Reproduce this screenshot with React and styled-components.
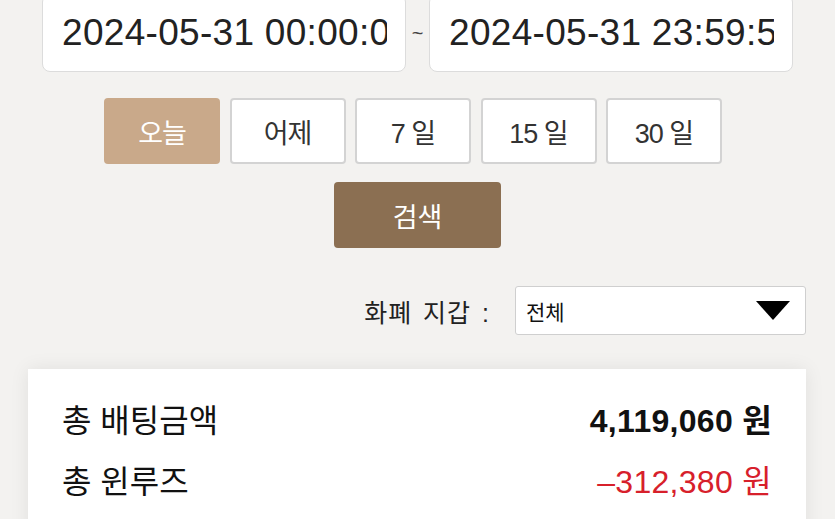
import React from "react";
import styled, { createGlobalStyle } from "styled-components";

const GlobalStyle = createGlobalStyle`
  html, body {
    margin: 0;
    padding: 0;
    background: #f3f2f0;
    font-family: "Liberation Sans", "Noto Sans CJK KR", sans-serif;
    overflow: hidden;
  }
`;

const Page = styled.div`
  width: 835px;
  margin-top: -6px;
`;

const DateRow = styled.div`
  display: flex;
  align-items: center;
  justify-content: center;
  padding: 0 42px;
`;

const DateInput = styled.div`
  width: 364px;
  height: 78px;
  box-sizing: border-box;
  background: #fff;
  border: 1px solid #dcdcdc;
  border-radius: 8px;
  display: flex;
  align-items: center;
  padding: 0 18px 0 19px;
`;

const DateText = styled.span`
  flex: 1;
  overflow: hidden;
  white-space: nowrap;
  font-size: 37px;
  letter-spacing: 0.3px;
  color: #222;
`;

const Tilde = styled.span`
  width: 23px;
  text-align: center;
  font-size: 20px;
  color: #444;
`;

const DayRow = styled.div`
  display: flex;
  justify-content: center;
  gap: 9.5px;
  margin-top: 26px;
  padding-right: 9px;
`;

const DayButton = styled.button`
  width: 116px;
  height: 66px;
  box-sizing: border-box;
  border-radius: 4px;
  border: ${(p) => (p.$active ? "none" : "2px solid #d3d3d3")};
  background: ${(p) => (p.$active ? "#c9a98a" : "#fff")};
  color: ${(p) => (p.$active ? "#fff" : "#333")};
  font-family: inherit;
  font-size: 27px;
  padding: 0;
  letter-spacing: -1px;
`;

const SearchRow = styled.div`
  display: flex;
  justify-content: center;
  margin-top: 18px;
`;

const SearchButton = styled.button`
  width: 167px;
  height: 66px;
  border: none;
  border-radius: 4px;
  background: #8b6f52;
  color: #fff;
  font-family: inherit;
  font-size: 27px;
  padding: 0;
`;

const WalletRow = styled.div`
  display: flex;
  justify-content: flex-end;
  align-items: center;
  gap: 25px;
  margin-top: 38px;
  padding-right: 29px;
`;

const WalletLabel = styled.span`
  font-size: 25px;
  letter-spacing: 1px;
  word-spacing: 3px;
  color: #222;
`;

const Select = styled.div`
  width: 291px;
  height: 49px;
  box-sizing: border-box;
  background: #fff;
  border: 1px solid #cfcfcf;
  border-radius: 3px;
  display: flex;
  align-items: center;
  justify-content: space-between;
  padding: 0 15px 0 10px;
  font-size: 21px;
  color: #111;
`;

const Card = styled.div`
  margin: 34px 29px 0 28px;
  background: #fff;
  box-shadow: 0 0 18px rgba(0, 0, 0, 0.08);
  padding: 18px 34px 30px;
`;

const SumRow = styled.div`
  display: flex;
  justify-content: space-between;
  align-items: center;
  height: 61px;
  font-size: 32px;
  color: #111;
`;

const Amount = styled.span`
  font-weight: ${(p) => (p.$red ? 400 : 600)};
  color: ${(p) => (p.$red ? "#d7202b" : "#111")};
  letter-spacing: 0.3px;
`;

const days = ["오늘", "어제", "7 일", "15 일", "30 일"];

export default function App() {
  return (
    <>
      <GlobalStyle />
      <Page>
        <DateRow>
          <DateInput>
            <DateText>2024-05-31 00:00:00</DateText>
          </DateInput>
          <Tilde>~</Tilde>
          <DateInput>
            <DateText>2024-05-31 23:59:59</DateText>
          </DateInput>
        </DateRow>
        <DayRow>
          {days.map((d, i) => (
            <DayButton key={d} $active={i === 0}>
              {d}
            </DayButton>
          ))}
        </DayRow>
        <SearchRow>
          <SearchButton>검색</SearchButton>
        </SearchRow>
        <WalletRow>
          <WalletLabel>화폐 지갑 :</WalletLabel>
          <Select>
            <span>전체</span>
            <svg width="34" height="19" viewBox="0 0 34 19">
              <path d="M0 0 H34 L17 19 Z" fill="#000" />
            </svg>
          </Select>
        </WalletRow>
        <Card>
          <SumRow>
            <span>총 배팅금액</span>
            <Amount>4,119,060 원</Amount>
          </SumRow>
          <SumRow>
            <span>총 윈루즈</span>
            <Amount $red>–312,380 원</Amount>
          </SumRow>
        </Card>
      </Page>
    </>
  );
}
